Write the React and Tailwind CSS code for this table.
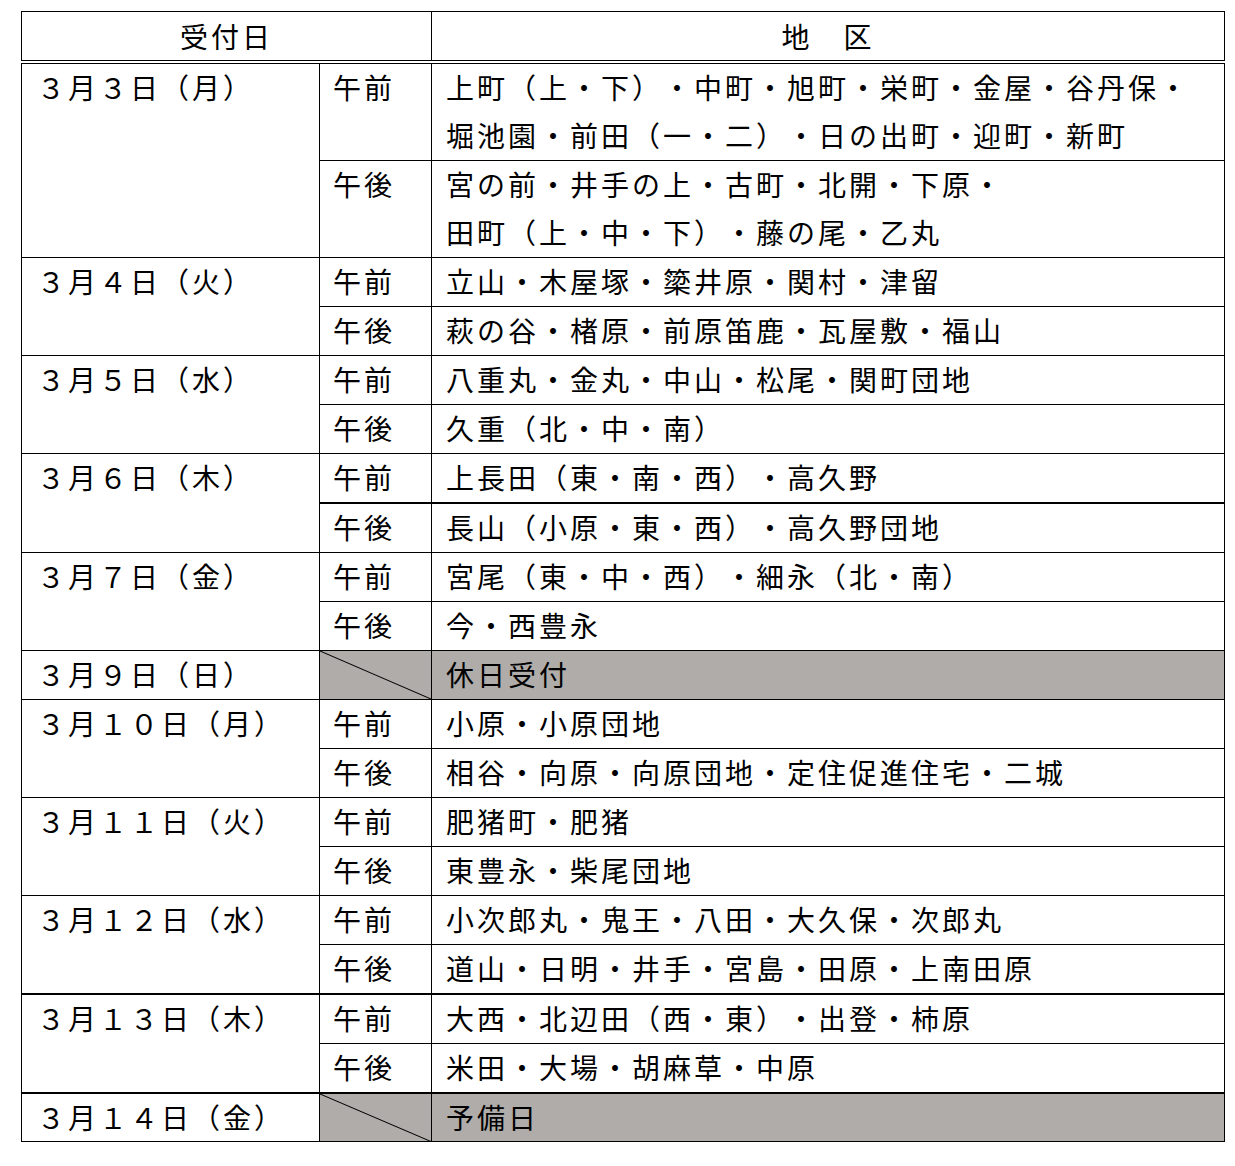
import React from 'react';

// Reception schedule: date, AM/PM, districts
const schedule = [
  { date: '３月３日（月）', slots: [
    { time: '午前', area: ['上町（上・下）・中町・旭町・栄町・金屋・谷丹保・', '堀池園・前田（一・二）・日の出町・迎町・新町'] },
    { time: '午後', area: ['宮の前・井手の上・古町・北開・下原・', '田町（上・中・下）・藤の尾・乙丸'] },
  ] },
  { date: '３月４日（火）', slots: [
    { time: '午前', area: ['立山・木屋塚・簗井原・関村・津留'] },
    { time: '午後', area: ['萩の谷・楮原・前原笛鹿・瓦屋敷・福山'] },
  ] },
  { date: '３月５日（水）', slots: [
    { time: '午前', area: ['八重丸・金丸・中山・松尾・関町団地'] },
    { time: '午後', area: ['久重（北・中・南）'] },
  ] },
  { date: '３月６日（木）', slots: [
    { time: '午前', area: ['上長田（東・南・西）・高久野'] },
    { time: '午後', area: ['長山（小原・東・西）・高久野団地'], thick: true },
  ] },
  { date: '３月７日（金）', slots: [
    { time: '午前', area: ['宮尾（東・中・西）・細永（北・南）'] },
    { time: '午後', area: ['今・西豊永'] },
  ] },
  { date: '３月９日（日）', holiday: '休日受付' },
  { date: '３月１０日（月）', slots: [
    { time: '午前', area: ['小原・小原団地'] },
    { time: '午後', area: ['相谷・向原・向原団地・定住促進住宅・二城'] },
  ] },
  { date: '３月１１日（火）', slots: [
    { time: '午前', area: ['肥猪町・肥猪'] },
    { time: '午後', area: ['東豊永・柴尾団地'] },
  ] },
  { date: '３月１２日（水）', slots: [
    { time: '午前', area: ['小次郎丸・鬼王・八田・大久保・次郎丸'] },
    { time: '午後', area: ['道山・日明・井手・宮島・田原・上南田原'] },
  ] },
  { date: '３月１３日（木）', thick: true, slots: [
    { time: '午前', area: ['大西・北辺田（西・東）・出登・柿原'] },
    { time: '午後', area: ['米田・大場・胡麻草・中原'] },
  ] },
  { date: '３月１４日（金）', thick: true, holiday: '予備日' },
];

const Diagonal = () => (
  <svg className="absolute inset-0 w-full h-full" viewBox="0 0 100 100" preserveAspectRatio="none">
    <line x1="0" y1="0" x2="100" y2="100" stroke="#000" strokeWidth="1" vectorEffect="non-scaling-stroke" />
  </svg>
);

const App = () => {
  const cell = 'border border-black align-top';
  const font = { fontFamily: '"MS Gothic", "Noto Sans CJK JP", sans-serif' };

  return (
    <div className="bg-white w-[1235px] h-[1166px] pt-[11px] pl-[21px]" style={font}>
      <table className="border-collapse table-fixed w-[1203px] text-black text-[28px] leading-[46px] tracking-[3px] [text-spacing-trim:space-all] [font-feature-settings:'fwid']">
        <colgroup>
          <col className="w-[298px]" />
          <col className="w-[112px]" />
          <col className="w-[793px]" />
        </colgroup>
        <thead>
          <tr className="h-[50px]">
            <th colSpan={2} className="border border-black border-b-[4px] border-b-black border-double font-normal text-center">受付日</th>
            <th className="border border-black border-b-[4px] border-b-black border-double font-normal text-center">地　区</th>
          </tr>
        </thead>
        <tbody>
          {schedule.map((day) => {
            const top = day.thick ? 'border-t-2' : '';
            if (day.holiday) {
              return (
                <tr key={day.date} className="h-[49px]">
                  <td className={`${cell} ${top} pl-[15px]`}>{day.date}</td>
                  <td className={`${cell} ${top} relative bg-[#afacaa]`}><Diagonal /></td>
                  <td className={`${cell} ${top} pl-[14px] bg-[#afacaa]`}>{day.holiday}</td>
                </tr>
              );
            }
            return day.slots.map((slot, i) => (
              <tr key={day.date + slot.time} className="h-[49px]">
                {i === 0 && (
                  <td rowSpan={day.slots.length} className={`${cell} ${top} pl-[15px]`}>{day.date}</td>
                )}
                <td className={`${cell} ${i === 0 ? top : ''} ${slot.thick ? 'border-t-2' : ''} pl-[13px]`}>{slot.time}</td>
                <td className={`${cell} ${i === 0 ? top : ''} ${slot.thick ? 'border-t-2' : ''} pl-[14px]`}>
                  {slot.area.map((line) => (
                    <div key={line} className="whitespace-nowrap h-[48px]">{line}</div>
                  ))}
                </td>
              </tr>
            ));
          })}
        </tbody>
      </table>
    </div>
  );
};

export default App;
